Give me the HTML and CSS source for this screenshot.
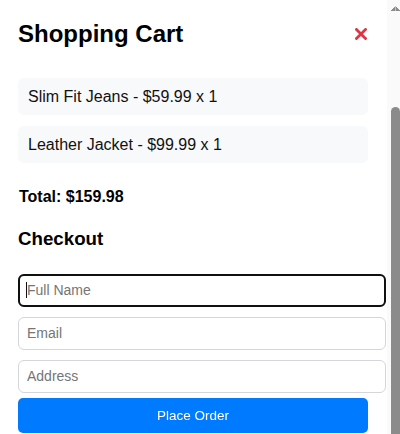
FILE: index.html
```html
<!DOCTYPE html>
<html lang="en-US">
<head>
    <meta charset="UTF-8">
    <meta name="viewport" content="width=device-width, initial-scale=1.0">
    <title>Shopping Cart</title>
    <link rel="stylesheet" href="styles.css">
</head>
<body>
    <div class="app">
        <aside class="cart-panel">
            <div class="cart-header">
                <h2>Shopping Cart</h2>
                <button class="close-btn" type="button" aria-label="Close cart">
                    <svg width="12" height="12" viewBox="0 0 12 12">
                        <path d="M1.5 1.5 L10.5 10.5 M10.5 1.5 L1.5 10.5" stroke="#dc3545" stroke-width="2.8" stroke-linecap="square" fill="none"/>
                    </svg>
                </button>
            </div>

            <ul class="cart-items">
                <li class="cart-item">Slim Fit Jeans - $59.99 x 1</li>
                <li class="cart-item">Leather Jacket - $99.99 x 1</li>
            </ul>

            <p class="cart-total">Total: $159.98</p>

            <h3 class="checkout-title">Checkout</h3>

            <form class="checkout-form" id="checkoutForm">
                <input class="field field-active" type="text" name="fullName" placeholder="Full Name" autofocus>
                <input class="field" type="email" name="email" placeholder="Email">
                <input class="field" type="text" name="address" placeholder="Address">
                <button class="order-btn" type="submit">Place Order</button>
            </form>
        </aside>

        <div class="scroll-rail" aria-hidden="true">
            <div class="scroll-arrow"></div>
            <div class="scroll-gap"></div>
            <div class="scroll-thumb"></div>
        </div>
    </div>
</body>
</html>
```

FILE: styles.css
```css
body {
    margin: 0;
    font-family: "Liberation Sans", Arial, sans-serif;
    color: #111;
    background: #fff;
}

.app {
    display: flex;
    height: 434px;
    overflow: hidden;
}

.cart-panel {
    flex: 1;
    min-width: 0;
    padding: 20px 19px 0 18px;
}

/* fake window scrollbar, page is scrolled to the bottom */
.scroll-rail {
    width: 13px;
    display: flex;
    flex-direction: column;
    background: #fafafa;
}

.scroll-arrow {
    height: 15px;
    background:
        linear-gradient(to top left, #8b8b8b 50%, transparent 50%) 4px 6px / 4.5px 5px no-repeat,
        linear-gradient(to top right, #8b8b8b 50%, transparent 50%) 8.5px 6px / 4.5px 5px no-repeat;
}

.scroll-gap {
    height: 92px;
}

.scroll-thumb {
    flex: 1;
    margin-left: 4px;
    background: #8b8b8b;
    border-radius: 5px 5px 0 0;
}

.cart-header {
    display: flex;
    justify-content: space-between;
    align-items: center;
    margin-bottom: 30px;
}

.cart-header h2 {
    margin: 0;
    font-size: 24px;
    line-height: 28px;
    font-weight: bold;
    color: #000;
}

.close-btn {
    display: flex;
    padding: 0;
    margin-right: 1px;
    border: none;
    background: none;
    cursor: pointer;
}

.cart-items {
    list-style: none;
    margin: 0;
    padding: 0;
}

.cart-item {
    background: #f8f9fa;
    border-radius: 6px;
    padding: 9px 10px;
    font-size: 16px;
    line-height: 19px;
    margin-bottom: 11px;
}

.cart-item:last-child {
    margin-bottom: 0;
}

.cart-total {
    margin: 25px 0 0 1px;
    font-size: 16px;
    line-height: 18px;
    font-weight: bold;
    color: #000;
}

.checkout-title {
    margin: 22px 0 0;
    font-size: 18.72px;
    line-height: 22px;
    font-weight: bold;
    color: #000;
}

.checkout-form {
    margin-top: 24px;
}

.field {
    display: block;
    width: 100%;
    padding: 7.25px 8px;
    margin: 0 0 10.5px;
    border: 1px solid #d3d6da;
    border-radius: 6px;
    font-family: "Liberation Sans", Arial, sans-serif;
    font-size: 14px;
    line-height: 16px;
    color: #111;
    background: #fff;
}

.field:last-of-type {
    margin-bottom: 5.5px;
}

.field::placeholder {
    color: #757575;
}

/* focused field, with its text caret */
.field-active,
.field:focus {
    outline: 2px solid #101010;
    outline-offset: -2px;
    background: linear-gradient(#111, #111) 7px 50% / 1px 16px no-repeat, #fff;
}

.order-btn {
    display: block;
    width: 100%;
    padding: 9.5px;
    border: none;
    border-radius: 5px;
    background: #007bff;
    color: #fff;
    font-family: "Liberation Sans", Arial, sans-serif;
    font-size: 13.5px;
    line-height: 16px;
    cursor: pointer;
}

.order-btn:hover {
    background: #0069d9;
}
```
